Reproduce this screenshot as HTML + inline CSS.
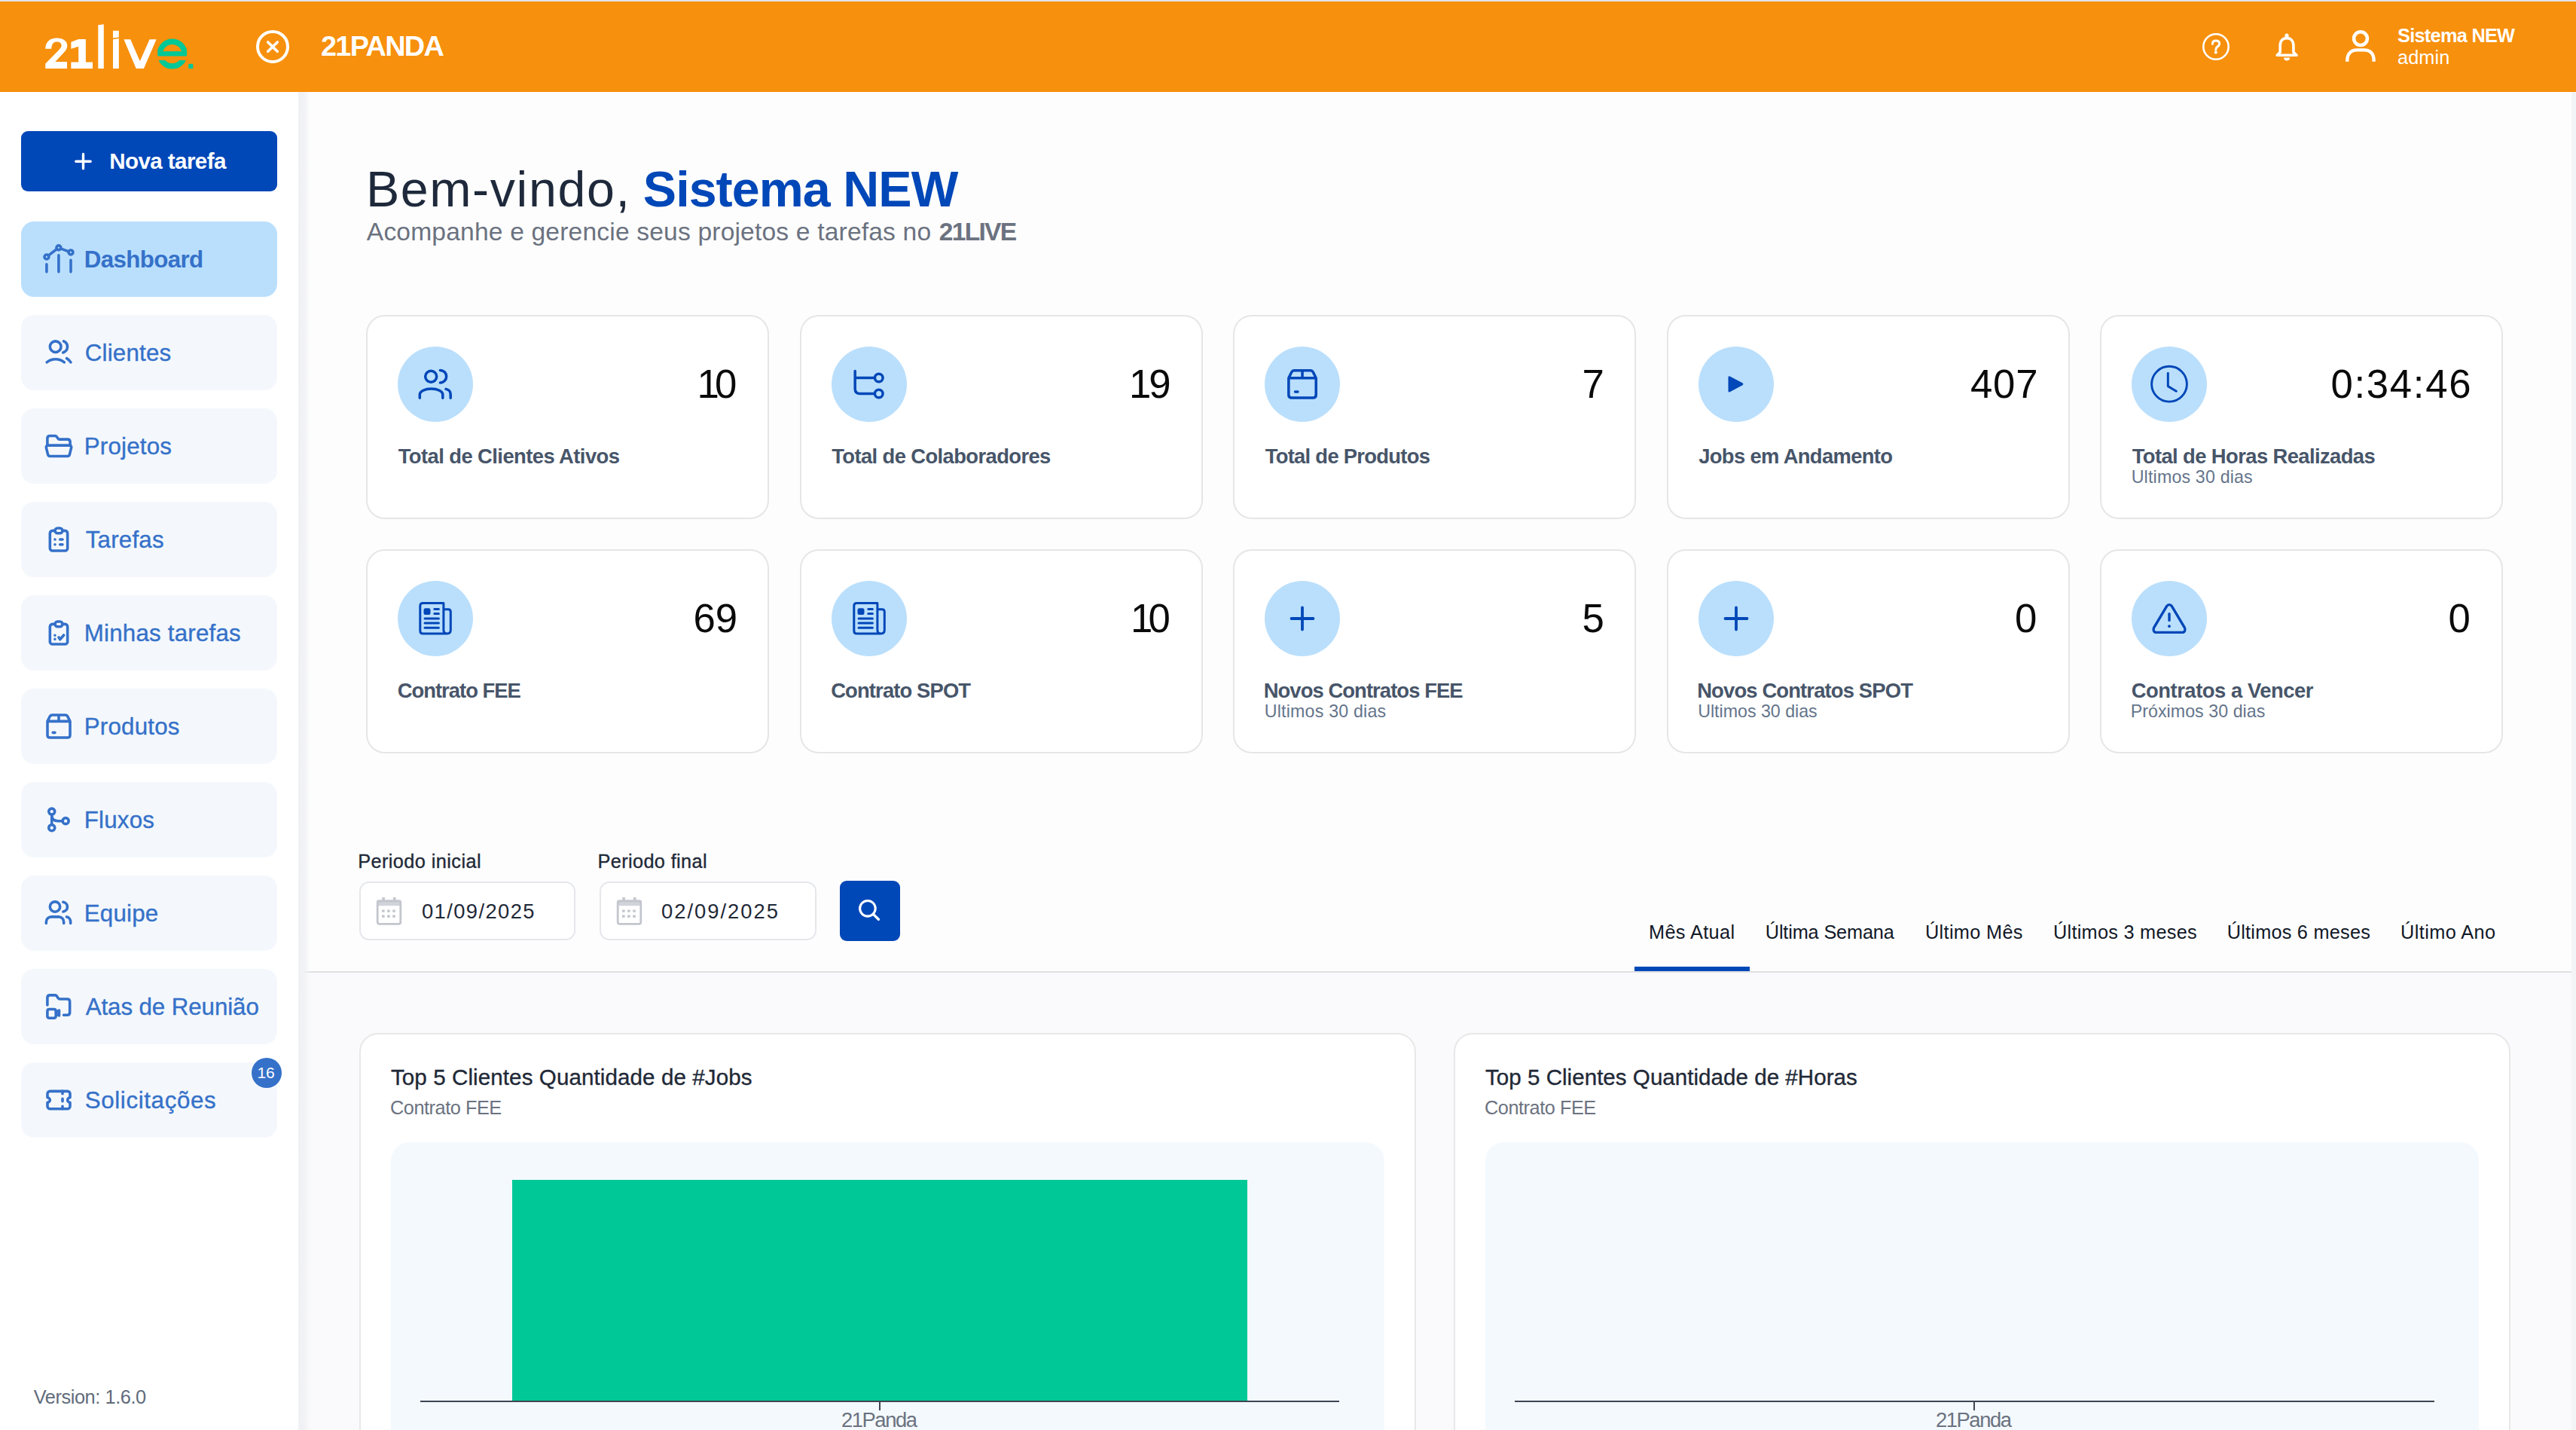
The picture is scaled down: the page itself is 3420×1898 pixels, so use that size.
<!DOCTYPE html>
<html lang="pt-BR"><head><meta charset="utf-8"><title>21live Dashboard</title>
<style>
html,body{margin:0;padding:0;width:3420px;height:1898px;overflow:hidden;background:#fff;font-family:'Liberation Sans', sans-serif}
body{position:relative;transform-origin:0 0}
@media (max-width:1800px){body{transform:scale(0.5)}}
.t{position:absolute;white-space:nowrap}
.abs{position:absolute}
header.top{position:absolute;left:0;top:0;width:3420px;height:122px;background:#F7900C;border-top:2px solid #E2E4E9;box-sizing:border-box}
header.top::after{content:"";position:absolute;left:0;right:0;bottom:0;height:1px;background:#F58A02}
aside.side{position:absolute;left:0;top:122px;width:396px;height:1776px;background:#fff}
main.main{position:absolute;left:396px;top:122px;width:3018px;height:1776px;background:#FAFAFC}
.rstrip{position:absolute;left:3414px;top:122px;width:6px;height:1776px;background:#F3F4F6}
.topsec{position:absolute;left:0;top:0;width:3018px;height:1167px;background:#FDFDFD;border-bottom:2px solid #DFE1E4}
.shade{position:absolute;left:396px;top:122px;width:16px;height:1776px;background:linear-gradient(to right,#F0F1F4 0,#F1F2F5 45%,rgba(250,250,252,0) 100%)}
.btn-new{position:absolute;left:28px;top:174px;width:340px;height:80px;border-radius:9px;background:#0047B8}
.nav{position:absolute;left:28px;width:340px;height:100px;border-radius:17px;background:#F4F8FC}
.nav.active{background:#BADFFD}
.badge{position:absolute;left:334px;top:1404px;width:40px;height:40px;border-radius:50%;background:#3571C9}
.card{position:absolute;width:535px;height:271px;box-sizing:border-box;border:2px solid #E6E6E6;border-radius:25px;background:#fff}
.ibub{position:absolute;width:100px;height:100px;border-radius:50%;background:#BADFFC}
.ibub svg{position:absolute;left:26px;top:26px;width:48px;height:48px}
.inp{position:absolute;top:1170px;width:287px;height:78px;box-sizing:border-box;border:2px solid #E5E7EB;border-radius:13px;background:#fff}
.sbtn{position:absolute;left:1115px;top:1169px;width:80px;height:80px;border-radius:9px;background:#0047B8}
.tabline{position:absolute;left:2170px;top:1283px;width:153px;height:6px;background:#0047B8}
.chart{position:absolute;top:1371px;width:1403px;height:600px;box-sizing:border-box;border:2px solid #E8E8E9;border-radius:25px;background:#fff}
.plot{position:absolute;top:1516px;width:1319px;height:500px;border-radius:25px;background:#F4F9FE}
.bar{position:absolute;left:680px;top:1566px;width:976px;height:293px;background:#00C896}
.axis{position:absolute;height:2px;top:1858px;background:#3F4652}
.tick{position:absolute;width:2px;height:11px;top:1859px;background:#3F4652}
svg.ic{position:absolute;overflow:visible}

</style></head><body>
<header class="top"></header>
<aside class="side"></aside>
<main class="main"><div class="topsec"></div></main>
<div class="rstrip"></div>
<div class="shade"></div>
<svg class="ic" style="left:0;top:0" width="3420" height="122" viewBox="0 0 3420 122">
<g fill="#fff">
<path d="M60.3 91 V84.5 L75.6 69 C80.2 64.3 81.6 62.5 81.6 60.2 C81.6 57.4 79.2 55.6 75.4 55.6 C71.5 55.6 68.8 57.6 68.2 64.7 L60.2 64.7 C60.6 55.6 66.1 50.6 75.3 50.6 C84.4 50.6 89.3 55 89.3 60.5 C89.3 64.9 87 67.8 82 72.7 L73.3 81.9 L89 81.9 L89 91 Z"/>
<path d="M94.4 55.7 L104.2 52.1 L113.9 51.9 L113.9 82.6 L123 82.6 L123 91 L94.4 91 L94.4 82.6 L104.2 82.6 L104.2 61.7 L94.4 64.7 Z"/>
<path d="M130.3 33.2 L137.8 32.3 L137.8 91 L130.3 91 Z"/>
<path d="M150 40.8 L157.8 40.8 L157.8 49.6 L150 50.6 Z"/>
<path d="M150 52.2 L157.8 51 L157.8 91 L150 91 Z"/>
<path d="M164.4 52.2 L173.2 52.2 L185.8 81.2 L198.6 52.2 L207.6 52.2 L190.9 91 L180.7 91 Z"/>
</g>
<defs><clipPath id="ecl"><rect x="200" y="40" width="60" height="28.1"/><rect x="200" y="80.1" width="60" height="20"/></clipPath></defs>
<circle cx="228.7" cy="71.5" r="16.3" fill="none" stroke="#00C896" stroke-width="7.4" clip-path="url(#ecl)"/>
<rect x="209.3" y="68.1" width="38.8" height="6.4" fill="#00C896"/>
<rect x="250.3" y="84.8" width="6" height="6.2" fill="#00C896"/>
<g fill="none" stroke="#fff" stroke-linecap="round">
<circle cx="362" cy="61.9" r="20" stroke-width="4"/>
<path d="M355.7 56 L368.3 68.3 M368.3 56 L355.7 68.3" stroke-width="3.6"/>
<circle cx="2942" cy="62" r="16.7" stroke-width="2.6"/>
<path d="M2937.4 58.2 C2937.4 55.5 2939.3 54 2942 54 C2944.8 54 2946.6 55.6 2946.6 58 C2946.6 60.3 2944.9 61.2 2943.6 62.3 C2942.4 63.3 2941.8 64.3 2941.8 66" stroke-width="3.1"/>
<path d="M3023.2 73.2 L3027.2 69.3 V60.5 C3027.2 54 3031 50.6 3036.1 50.6 C3041.2 50.6 3044.9 54 3044.9 60.5 V69.3 L3049 73.2 Z" stroke-width="3.6" stroke-linejoin="round"/>
<circle cx="3134" cy="51.1" r="8.9" stroke-width="4.6"/>
<path d="M3116.3 81.8 V79.5 C3116.3 71.5 3121.5 66.4 3129 66.4 H3139 C3146.5 66.4 3151.6 71.5 3151.6 79.5 V81.8" stroke-width="4.4" stroke-linecap="butt"/>
</g>
<g fill="#fff">
<circle cx="2941.8" cy="69.6" r="2"/>
<circle cx="3036" cy="47.2" r="2.6"/>
<path d="M3032 76.6 H3040.2 C3040.2 79 3038.5 80.6 3036.1 80.6 C3033.7 80.6 3032 79 3032 76.6 Z"/>
</g>
</svg>
<div class="btn-new"></div>
<svg class="ic" style="left:0;top:0" width="400" height="260" viewBox="0 0 400 260"><path d="M110.5 204.5 V223.8 M100.8 214.2 H120.2" stroke="#fff" stroke-width="3.4" stroke-linecap="round"/></svg>
<div class="nav active" style="top:294px"></div>
<div class="nav" style="top:418px"></div>
<div class="nav" style="top:542px"></div>
<div class="nav" style="top:666px"></div>
<div class="nav" style="top:790px"></div>
<div class="nav" style="top:914px"></div>
<div class="nav" style="top:1038px"></div>
<div class="nav" style="top:1162px"></div>
<div class="nav" style="top:1286px"></div>
<div class="nav" style="top:1410px"></div>
<div class="badge"></div>
<svg class="ic" style="left:58px;top:324px" width="40" height="40" viewBox="0 0 24 24" fill="none" stroke="#3571C9" stroke-width="2.15" stroke-linecap="round" stroke-linejoin="round"><circle cx="2.34" cy="10.2" r="1.76"/><circle cx="11.94" cy="2.88" r="1.76"/><circle cx="21.6" cy="6.54" r="1.76"/><path d="M3.75 9.1 L10.5 3.9 M13.6 3.5 L19.9 5.9 M2.34 16.1 V22.1 M11.94 8.9 V22.1 M21.6 12.8 V22.1"/></svg>
<svg class="ic" style="left:58px;top:448px" width="40" height="40" viewBox="0 0 24 24" fill="none" stroke="#3571C9" stroke-width="2.15" stroke-linecap="round" stroke-linejoin="round"><circle cx="9.4" cy="7.3" r="4.4"/><path d="M15.9 2.9 A4.83 4.83 0 0 1 15.4 12 M2.5 19.7 A11.2 11.2 0 0 1 16.4 19.7 M18.3 16.6 A9 9 0 0 1 21.6 19.7"/></svg>
<svg class="ic" style="left:58px;top:572px" width="40" height="40" viewBox="0 0 24 24" fill="none" stroke="#3571C9" stroke-width="2.15" stroke-linecap="round" stroke-linejoin="round"><path d="M2.94 10.8 V5.9 Q2.94 3.9 4.94 3.9 H9.2 Q9.9 3.9 10.4 4.6 L11.4 6 Q11.8 6.66 12.6 6.66 H19 Q21.06 6.66 21.06 8.7 V10.8"/><path d="M4 11.46 H20.1 Q22.3 11.46 22 13.3 L20.7 18.5 Q20.4 20.1 18.9 20.1 H5.1 Q3.6 20.1 3.3 18.5 L2 13.3 Q1.7 11.46 4 11.46 Z"/></svg>
<svg class="ic" style="left:58px;top:696px" width="40" height="40" viewBox="0 0 24 24" fill="none" stroke="#3571C9" stroke-width="2.15" stroke-linecap="round" stroke-linejoin="round"><path d="M9 5h-2a2 2 0 0 0 -2 2v12a2 2 0 0 0 2 2h10a2 2 0 0 0 2 -2v-12a2 2 0 0 0 -2 -2h-2"/><path d="M9 5a2 2 0 0 1 2 -2h2a2 2 0 0 1 2 2v0a2 2 0 0 1 -2 2h-2a2 2 0 0 1 -2 -2z"/><path d="M9 12l.01 0 M13 12l2 0 M9 16l.01 0 M13 16l2 0"/></svg>
<svg class="ic" style="left:58px;top:820px" width="40" height="40" viewBox="0 0 24 24" fill="none" stroke="#3571C9" stroke-width="2.15" stroke-linecap="round" stroke-linejoin="round"><path d="M9 5h-2a2 2 0 0 0 -2 2v12a2 2 0 0 0 2 2h10a2 2 0 0 0 2 -2v-12a2 2 0 0 0 -2 -2h-2"/><path d="M9 5a2 2 0 0 1 2 -2h2a2 2 0 0 1 2 2v0a2 2 0 0 1 -2 2h-2a2 2 0 0 1 -2 -2z"/><path d="M8.94 13.9l.01 0 M8.94 17l.01 0 M12 15.6 L13.1 17.2 L16 13.8"/></svg>
<svg class="ic" style="left:58px;top:944px" width="40" height="40" viewBox="0 0 24 24" fill="none" stroke="#3571C9" stroke-width="2.15" stroke-linecap="round" stroke-linejoin="round"><path d="M3 8 L4.9 4.2 Q5.5 3 6.8 3 H17.2 Q18.5 3 19.1 4.2 L21 8 V19 Q21 21 19 21 H5 Q3 21 3 19 Z M3 8 H21 M12 3 V8 M7.3 17 H9"/></svg>
<svg class="ic" style="left:58px;top:1068px" width="40" height="40" viewBox="0 0 24 24" fill="none" stroke="#3571C9" stroke-width="2.15" stroke-linecap="round" stroke-linejoin="round"><circle cx="6.44" cy="5.46" r="2.4"/><circle cx="6.44" cy="18.4" r="2.4"/><circle cx="17.5" cy="12.98" r="2.4"/><path d="M6.44 7.86 V16 M6.44 8.6 Q6.6 13 11.5 13 H15.1"/></svg>
<svg class="ic" style="left:58px;top:1192px" width="40" height="40" viewBox="0 0 24 24" fill="none" stroke="#3571C9" stroke-width="2.15" stroke-linecap="round" stroke-linejoin="round"><circle cx="9" cy="6.9" r="4"/><path d="M15.5 3.2 A4 3.85 0 0 1 15.5 10.8 M2 20.1 V19 A4.1 4.1 0 0 1 6.1 14.9 H11.9 A4.1 4.1 0 0 1 16 19 V20.1 M18.3 14.95 A3.4 4.2 0 0 1 21.4 19 V20.1"/></svg>
<svg class="ic" style="left:58px;top:1316px" width="40" height="40" viewBox="0 0 24 24" fill="none" stroke="#3571C9" stroke-width="2.15" stroke-linecap="round" stroke-linejoin="round"><path d="M2.94 10.8 V5 Q2.94 2.94 5 2.94 H9.3 Q9.9 2.94 10.3 3.5 L11.5 5.3 Q12 6 12.8 6 H18.8 Q20.8 6 20.8 8 V16.6 Q20.8 18.7 18.8 18.7 H15.9"/><path d="M4.6 14.1 H8.1 Q9.7 14.1 9.7 15.7 V19.5 Q9.7 21.1 8.1 21.1 H4.6 Q2.94 21.1 2.94 19.5 V15.7 Q2.94 14.1 4.6 14.1 Z M9.7 16.6 L12.3 15.1 V19.2 L9.7 17.8"/></svg>
<svg class="ic" style="left:58px;top:1440px" width="40" height="40" viewBox="0 0 24 24" fill="none" stroke="#3571C9" stroke-width="2.15" stroke-linecap="round" stroke-linejoin="round"><path d="M15 5l0 2 M15 11l0 2 M15 17l0 2"/><path d="M5 5h14a2 2 0 0 1 2 2v3a2 2 0 0 0 0 4v3a2 2 0 0 1 -2 2h-14a2 2 0 0 1 -2 -2v-3a2 2 0 0 0 0 -4v-3a2 2 0 0 1 2 -2"/></svg>
<div class="card" style="left:486.0px;top:418px"></div>
<div class="ibub" style="left:528.0px;top:460px"></div>
<div class="card" style="left:1061.5px;top:418px"></div>
<div class="ibub" style="left:1103.5px;top:460px"></div>
<div class="card" style="left:1637.0px;top:418px"></div>
<div class="ibub" style="left:1679.0px;top:460px"></div>
<div class="card" style="left:2212.5px;top:418px"></div>
<div class="ibub" style="left:2254.5px;top:460px"></div>
<div class="card" style="left:2788.0px;top:418px"></div>
<div class="ibub" style="left:2830.0px;top:460px"></div>
<div class="card" style="left:486.0px;top:729px"></div>
<div class="ibub" style="left:528.0px;top:771px"></div>
<div class="card" style="left:1061.5px;top:729px"></div>
<div class="ibub" style="left:1103.5px;top:771px"></div>
<div class="card" style="left:1637.0px;top:729px"></div>
<div class="ibub" style="left:1679.0px;top:771px"></div>
<div class="card" style="left:2212.5px;top:729px"></div>
<div class="ibub" style="left:2254.5px;top:771px"></div>
<div class="card" style="left:2788.0px;top:729px"></div>
<div class="ibub" style="left:2830.0px;top:771px"></div>
<svg class="ic" style="left:528.0px;top:460px" width="100" height="100" viewBox="0 0 100 100" fill="none" stroke="#0047B8" stroke-width="3.5" stroke-linecap="round" stroke-linejoin="round"><circle cx="44.2" cy="39.7" r="7.5"/><path d="M56.4 31.4 A8.2 8.2 0 0 1 56.4 47.9 M29.3 68.2 V63.6 A15.25 7.6 0 0 1 59.8 63.6 V68.2 M64 56.4 C68 57.2 70.2 60 70.2 63.6 V68.2"/></svg>
<svg class="ic" style="left:1103.5px;top:460px" width="100" height="100" viewBox="0 0 100 100" fill="none" stroke="#0047B8" stroke-width="3.5" stroke-linecap="round" stroke-linejoin="round"><path d="M31.2 32.4 V56 Q31.2 62.5 37.7 62.5 H57.4 M31.2 41.5 H57.4"/><circle cx="62.75" cy="41.5" r="5.3"/><circle cx="62.75" cy="62.5" r="5.3"/></svg>
<svg class="ic" style="left:1679.0px;top:460px" width="100" height="100" viewBox="0 0 100 100" fill="none" stroke="#0047B8" stroke-width="3.5" stroke-linecap="round" stroke-linejoin="round"><g transform="translate(25.8 25.6) scale(2.02)" stroke-width="1.75"><path d="M3 8 L4.9 4.2 Q5.5 3 6.8 3 H17.2 Q18.5 3 19.1 4.2 L21 8 V19 Q21 21 19 21 H5 Q3 21 3 19 Z M3 8 H21 M12 3 V8 M7.3 17 H9"/></g></svg>
<svg class="ic" style="left:2254.5px;top:460px" width="100" height="100" viewBox="0 0 100 100" fill="none" stroke="#0047B8" stroke-width="3.5" stroke-linecap="round" stroke-linejoin="round"><path d="M41.6 39.6 L58.4 48.3 Q60.4 49.8 58.4 51.3 L41.6 60.2 Q39.5 61.2 39.5 58.8 V41 Q39.5 38.6 41.6 39.6 Z" fill="#0047B8" stroke="none"/></svg>
<svg class="ic" style="left:2830.0px;top:460px" width="100" height="100" viewBox="0 0 100 100" fill="none" stroke="#0047B8" stroke-width="3.5" stroke-linecap="round" stroke-linejoin="round"><circle cx="50" cy="49.7" r="23.4" stroke-width="2.9"/><path d="M48.3 35.2 V52.6 L59.3 59.2" stroke-width="3"/></svg>
<svg class="ic" style="left:528.0px;top:771px" width="100" height="100" viewBox="0 0 100 100" fill="none" stroke="#0047B8" stroke-width="3.5" stroke-linecap="round" stroke-linejoin="round"><path d="M60.9 29.4 H33.5 Q29.8 29.4 29.8 33.1 V66.3 Q29.8 70 33.5 70 H65.6 Q70.3 70 70.3 65.3 V41 Q70.3 37.8 67.1 37.8 H60.9 M60.9 29.4 V65.3 Q60.9 70 65.6 70" stroke-width="3"/><rect x="36" y="37.8" width="6" height="5.6" rx="1" stroke-width="3" fill="#0047B8"/><path d="M48.8 37.6 H54.4 M48.8 43.4 H54.4 M36 50 H54.4 M36 56 H54.4 M36 62.2 H54.4" stroke-width="3"/></svg>
<svg class="ic" style="left:1103.5px;top:771px" width="100" height="100" viewBox="0 0 100 100" fill="none" stroke="#0047B8" stroke-width="3.5" stroke-linecap="round" stroke-linejoin="round"><path d="M60.9 29.4 H33.5 Q29.8 29.4 29.8 33.1 V66.3 Q29.8 70 33.5 70 H65.6 Q70.3 70 70.3 65.3 V41 Q70.3 37.8 67.1 37.8 H60.9 M60.9 29.4 V65.3 Q60.9 70 65.6 70" stroke-width="3"/><rect x="36" y="37.8" width="6" height="5.6" rx="1" stroke-width="3" fill="#0047B8"/><path d="M48.8 37.6 H54.4 M48.8 43.4 H54.4 M36 50 H54.4 M36 56 H54.4 M36 62.2 H54.4" stroke-width="3"/></svg>
<svg class="ic" style="left:1679.0px;top:771px" width="100" height="100" viewBox="0 0 100 100" fill="none" stroke="#0047B8" stroke-width="3.5" stroke-linecap="round" stroke-linejoin="round"><path d="M50 35.4 V64.5 M35.5 50 H64.5" stroke-width="3.8"/></svg>
<svg class="ic" style="left:2254.5px;top:771px" width="100" height="100" viewBox="0 0 100 100" fill="none" stroke="#0047B8" stroke-width="3.5" stroke-linecap="round" stroke-linejoin="round"><path d="M50 35.4 V64.5 M35.5 50 H64.5" stroke-width="3.8"/></svg>
<svg class="ic" style="left:2830.0px;top:771px" width="100" height="100" viewBox="0 0 100 100" fill="none" stroke="#0047B8" stroke-width="3.5" stroke-linecap="round" stroke-linejoin="round"><path d="M46.6 33.6 L29.6 62.2 C28 65.2 29.6 68.4 33 68.4 H67 C70.4 68.4 72 65.2 70.4 62.2 L53.4 33.6 C51.8 30.9 48.2 30.9 46.6 33.6 Z M50 43.6 V52.4" stroke-width="3.4"/><circle cx="50" cy="60.2" r="1.9" fill="#0047B8" stroke="none"/></svg>
<div class="inp" style="left:477px"></div>
<div class="inp" style="left:796px;width:288px"></div>
<svg class="ic" style="left:500.0px;top:1188px" width="34" height="40" viewBox="0 0 34 40"><rect x="1.2" y="8" width="30.6" height="30.4" rx="2.4" fill="none" stroke="#C3C6CD" stroke-width="2.8"/><rect x="0" y="6.6" width="33" height="7.6" rx="2" fill="#C3C6CD" fill-opacity="0.75"/><g fill="#C3C6CD"><rect x="7.3" y="3" width="3.6" height="5"/><rect x="21.9" y="3" width="3.6" height="5"/><rect x="7" y="19.5" width="3.6" height="3.2"/><rect x="14.1" y="19.5" width="3.6" height="3.2"/><rect x="21.2" y="19.5" width="3.6" height="3.2"/><rect x="7" y="26.5" width="3.6" height="3.4"/><rect x="14.1" y="26.5" width="3.6" height="3.4"/><rect x="21.2" y="26.5" width="3.6" height="3.4"/></g></svg>
<svg class="ic" style="left:818.5px;top:1188px" width="34" height="40" viewBox="0 0 34 40"><rect x="1.2" y="8" width="30.6" height="30.4" rx="2.4" fill="none" stroke="#C3C6CD" stroke-width="2.8"/><rect x="0" y="6.6" width="33" height="7.6" rx="2" fill="#C3C6CD" fill-opacity="0.75"/><g fill="#C3C6CD"><rect x="7.3" y="3" width="3.6" height="5"/><rect x="21.9" y="3" width="3.6" height="5"/><rect x="7" y="19.5" width="3.6" height="3.2"/><rect x="14.1" y="19.5" width="3.6" height="3.2"/><rect x="21.2" y="19.5" width="3.6" height="3.2"/><rect x="7" y="26.5" width="3.6" height="3.4"/><rect x="14.1" y="26.5" width="3.6" height="3.4"/><rect x="21.2" y="26.5" width="3.6" height="3.4"/></g></svg>
<div class="sbtn"></div>
<svg class="ic" style="left:1130px;top:1185px" width="50" height="50" viewBox="0 0 50 50" fill="none" stroke="#fff" stroke-linecap="round"><circle cx="21.9" cy="20.8" r="10.3" stroke-width="3.1"/><path d="M29.6 28.6 L36.4 35.3" stroke-width="3.4"/></svg>
<div class="tabline"></div>
<div class="chart" style="left:477px"></div>
<div class="chart" style="left:1930px"></div>
<div class="plot" style="left:519px"></div>
<div class="plot" style="left:1972px"></div>
<div class="bar"></div>
<div class="axis" style="left:558px;width:1220px;top:1859px"></div>
<div class="axis" style="left:2011px;width:1221px;top:1859px"></div>
<div class="tick" style="left:1167px;top:1861px"></div>
<div class="tick" style="left:2620px;top:1861px"></div>
<div class="t" id="hdr_org" style="left:426.00px;top:42.54px;font-size:37.83px;line-height:37.83px;font-weight:700;letter-spacing:-1.667px;color:#fff">21PANDA</div>
<div class="t" id="hdr_name" style="left:3183.00px;top:35.23px;font-size:25.29px;line-height:25.29px;font-weight:700;letter-spacing:-0.700px;color:#fff">Sistema NEW</div>
<div class="t" id="hdr_role" style="left:3183.00px;top:63.83px;font-size:25.29px;line-height:25.29px;font-weight:400;letter-spacing:0.125px;color:#fff">admin</div>
<div class="t" id="btn_new" style="left:145.30px;top:199.02px;font-size:29.57px;line-height:29.57px;font-weight:700;letter-spacing:-0.600px;color:#fff">Nova tarefa</div>
<div class="t" id="side0" style="left:111.70px;top:328.65px;font-size:31.30px;line-height:31.30px;font-weight:700;letter-spacing:-0.625px;color:#3571C9">Dashboard</div>
<div class="t" id="side1" style="left:112.70px;top:452.65px;font-size:31.30px;line-height:31.30px;font-weight:400;letter-spacing:0.214px;-webkit-text-stroke:0.35px currentColor;color:#3571C9">Clientes</div>
<div class="t" id="side2" style="left:111.70px;top:576.65px;font-size:31.30px;line-height:31.30px;font-weight:400;letter-spacing:0.214px;-webkit-text-stroke:0.35px currentColor;color:#3571C9">Projetos</div>
<div class="t" id="side3" style="left:113.70px;top:700.65px;font-size:31.30px;line-height:31.30px;font-weight:400;letter-spacing:0.214px;-webkit-text-stroke:0.35px currentColor;color:#3571C9">Tarefas</div>
<div class="t" id="side4" style="left:111.70px;top:824.65px;font-size:31.30px;line-height:31.30px;font-weight:400;letter-spacing:0.214px;-webkit-text-stroke:0.35px currentColor;color:#3571C9">Minhas tarefas</div>
<div class="t" id="side5" style="left:111.70px;top:948.65px;font-size:31.30px;line-height:31.30px;font-weight:400;letter-spacing:0.214px;-webkit-text-stroke:0.35px currentColor;color:#3571C9">Produtos</div>
<div class="t" id="side6" style="left:111.70px;top:1072.65px;font-size:31.30px;line-height:31.30px;font-weight:400;letter-spacing:0.214px;-webkit-text-stroke:0.35px currentColor;color:#3571C9">Fluxos</div>
<div class="t" id="side7" style="left:111.70px;top:1196.65px;font-size:31.30px;line-height:31.30px;font-weight:400;letter-spacing:0.214px;-webkit-text-stroke:0.35px currentColor;color:#3571C9">Equipe</div>
<div class="t" id="side8" style="left:113.70px;top:1320.65px;font-size:31.30px;line-height:31.30px;font-weight:400;letter-spacing:-0.093px;-webkit-text-stroke:0.35px currentColor;color:#3571C9">Atas de Reuni&atilde;o</div>
<div class="t" id="side9" style="left:112.70px;top:1444.65px;font-size:31.30px;line-height:31.30px;font-weight:400;letter-spacing:0.636px;-webkit-text-stroke:0.35px currentColor;color:#3571C9">Solicita&ccedil;&otilde;es</div>
<div class="t" id="version" style="left:44.80px;top:1842.43px;font-size:25.29px;line-height:25.29px;font-weight:400;letter-spacing:-0.408px;color:#5F6B7B">Version: 1.6.0</div>
<div class="t" id="welcome1" style="left:485.90px;top:217.61px;font-size:66.38px;line-height:66.38px;font-weight:400;letter-spacing:1.589px;color:#1E293B">Bem-vindo,</div>
<div class="t" id="welcome2" style="left:853.80px;top:217.61px;font-size:66.38px;line-height:66.38px;font-weight:700;letter-spacing:-0.930px;color:#0047B8">Sistema NEW</div>
<div class="t" id="sub1" style="left:486.80px;top:291.39px;font-size:33.62px;line-height:33.62px;font-weight:400;letter-spacing:0.165px;color:#6B7280">Acompanhe e gerencie seus projetos e tarefas no</div>
<div class="t" id="sub2" style="left:1246.80px;top:291.39px;font-size:33.62px;line-height:33.62px;font-weight:700;letter-spacing:-1.760px;color:#6B7280">21LIVE</div>
<div class="t" id="val00" style="left:925.50px;top:484.22px;font-size:52.75px;line-height:52.75px;font-weight:400;letter-spacing:-5.800px;color:#0A0A0A">10</div>
<div class="t" id="lab00" style="left:528.70px;top:591.65px;font-size:27.39px;line-height:27.39px;font-weight:700;letter-spacing:-0.565px;color:#475569">Total de Clientes Ativos</div>
<div class="t" id="val01" style="left:1499.00px;top:484.22px;font-size:52.75px;line-height:52.75px;font-weight:400;letter-spacing:-3.000px;color:#0A0A0A">19</div>
<div class="t" id="lab01" style="left:1104.20px;top:591.65px;font-size:27.39px;line-height:27.39px;font-weight:700;letter-spacing:-0.600px;color:#475569">Total de Colaboradores</div>
<div class="t" id="val02" style="left:2100.50px;top:484.22px;font-size:52.75px;line-height:52.75px;font-weight:400;letter-spacing:0.000px;color:#0A0A0A">7</div>
<div class="t" id="lab02" style="left:1679.70px;top:591.65px;font-size:27.39px;line-height:27.39px;font-weight:700;letter-spacing:-0.713px;color:#475569">Total de Produtos</div>
<div class="t" id="val03" style="left:2616.00px;top:484.22px;font-size:52.75px;line-height:52.75px;font-weight:400;letter-spacing:0.750px;color:#0A0A0A">407</div>
<div class="t" id="lab03" style="left:2255.20px;top:591.65px;font-size:27.39px;line-height:27.39px;font-weight:700;letter-spacing:-0.650px;color:#475569">Jobs em Andamento</div>
<div class="t" id="val04" style="left:3094.50px;top:484.22px;font-size:52.75px;line-height:52.75px;font-weight:400;letter-spacing:1.667px;color:#0A0A0A">0:34:46</div>
<div class="t" id="lab04" style="left:2830.70px;top:591.65px;font-size:27.39px;line-height:27.39px;font-weight:700;letter-spacing:-0.592px;color:#475569">Total de Horas Realizadas</div>
<div class="t" id="sub04" style="left:2829.70px;top:622.21px;font-size:23.19px;line-height:23.19px;font-weight:400;letter-spacing:0.179px;color:#64748B">Ultimos 30 dias</div>
<div class="t" id="val10" style="left:920.50px;top:795.22px;font-size:52.75px;line-height:52.75px;font-weight:400;letter-spacing:0.000px;color:#0A0A0A">69</div>
<div class="t" id="lab10" style="left:527.70px;top:902.65px;font-size:27.39px;line-height:27.39px;font-weight:700;letter-spacing:-0.973px;color:#475569">Contrato FEE</div>
<div class="t" id="val11" style="left:1501.00px;top:795.22px;font-size:52.75px;line-height:52.75px;font-weight:400;letter-spacing:-5.800px;color:#0A0A0A">10</div>
<div class="t" id="lab11" style="left:1103.20px;top:902.65px;font-size:27.39px;line-height:27.39px;font-weight:700;letter-spacing:-0.858px;color:#475569">Contrato SPOT</div>
<div class="t" id="val12" style="left:2100.50px;top:795.22px;font-size:52.75px;line-height:52.75px;font-weight:400;letter-spacing:0.000px;color:#0A0A0A">5</div>
<div class="t" id="lab12" style="left:1677.70px;top:902.65px;font-size:27.39px;line-height:27.39px;font-weight:700;letter-spacing:-0.917px;color:#475569">Novos Contratos FEE</div>
<div class="t" id="sub12" style="left:1678.70px;top:933.21px;font-size:23.19px;line-height:23.19px;font-weight:400;letter-spacing:0.214px;color:#64748B">Ultimos 30 dias</div>
<div class="t" id="val13" style="left:2675.00px;top:795.22px;font-size:52.75px;line-height:52.75px;font-weight:400;letter-spacing:0.000px;color:#0A0A0A">0</div>
<div class="t" id="lab13" style="left:2253.20px;top:902.65px;font-size:27.39px;line-height:27.39px;font-weight:700;letter-spacing:-0.842px;color:#475569">Novos Contratos SPOT</div>
<div class="t" id="sub13" style="left:2254.20px;top:933.21px;font-size:23.19px;line-height:23.19px;font-weight:400;letter-spacing:0.000px;color:#64748B">Ultimos 30 dias</div>
<div class="t" id="val14" style="left:3250.50px;top:795.22px;font-size:52.75px;line-height:52.75px;font-weight:400;letter-spacing:0.000px;color:#0A0A0A">0</div>
<div class="t" id="lab14" style="left:2829.70px;top:902.65px;font-size:27.39px;line-height:27.39px;font-weight:700;letter-spacing:-0.459px;color:#475569">Contratos a Vencer</div>
<div class="t" id="sub14" style="left:2828.70px;top:933.21px;font-size:23.19px;line-height:23.19px;font-weight:400;letter-spacing:0.053px;color:#64748B">Pr&oacute;ximos 30 dias</div>
<div class="t" id="lbl_ini" style="left:475.20px;top:1131.43px;font-size:25.29px;line-height:25.29px;font-weight:400;letter-spacing:0.429px;-webkit-text-stroke:0.35px currentColor;color:#1F2937">Periodo inicial</div>
<div class="t" id="lbl_fin" style="left:793.50px;top:1131.43px;font-size:25.29px;line-height:25.29px;font-weight:400;letter-spacing:0.375px;-webkit-text-stroke:0.35px currentColor;color:#1F2937">Periodo final</div>
<div class="t" id="date1" style="left:560.00px;top:1195.65px;font-size:27.39px;line-height:27.39px;font-weight:400;letter-spacing:1.389px;color:#1F2937">01/09/2025</div>
<div class="t" id="date2" style="left:878.00px;top:1195.65px;font-size:27.39px;line-height:27.39px;font-weight:400;letter-spacing:2.000px;color:#1F2937">02/09/2025</div>
<div class="t" id="tab0" style="left:2189.00px;top:1225.43px;font-size:25.29px;line-height:25.29px;font-weight:400;letter-spacing:0.375px;color:#111827">M&ecirc;s Atual</div>
<div class="t" id="tab1" style="left:2343.80px;top:1225.43px;font-size:25.29px;line-height:25.29px;font-weight:400;letter-spacing:-0.150px;color:#111827">&Uacute;ltima Semana</div>
<div class="t" id="tab2" style="left:2556.00px;top:1225.43px;font-size:25.29px;line-height:25.29px;font-weight:400;letter-spacing:0.333px;color:#111827">&Uacute;ltimo M&ecirc;s</div>
<div class="t" id="tab3" style="left:2726.00px;top:1225.43px;font-size:25.29px;line-height:25.29px;font-weight:400;letter-spacing:0.271px;color:#111827">&Uacute;ltimos 3 meses</div>
<div class="t" id="tab4" style="left:2956.70px;top:1225.43px;font-size:25.29px;line-height:25.29px;font-weight:400;letter-spacing:0.236px;color:#111827">&Uacute;ltimos 6 meses</div>
<div class="t" id="tab5" style="left:3187.00px;top:1225.43px;font-size:25.29px;line-height:25.29px;font-weight:400;letter-spacing:0.411px;color:#111827">&Uacute;ltimo Ano</div>
<div class="t" id="ch1_t" style="left:518.90px;top:1414.82px;font-size:29.57px;line-height:29.57px;font-weight:400;letter-spacing:0.091px;-webkit-text-stroke:0.35px currentColor;color:#1F2937">Top 5 Clientes Quantidade de #Jobs</div>
<div class="t" id="ch1_s" style="left:518.00px;top:1458.23px;font-size:25.29px;line-height:25.29px;font-weight:400;letter-spacing:-0.455px;color:#6B7280">Contrato FEE</div>
<div class="t" id="ch2_t" style="left:1972.00px;top:1414.82px;font-size:29.57px;line-height:29.57px;font-weight:400;letter-spacing:0.021px;-webkit-text-stroke:0.35px currentColor;color:#1F2937">Top 5 Clientes Quantidade de #Horas</div>
<div class="t" id="ch2_s" style="left:1971.00px;top:1458.23px;font-size:25.29px;line-height:25.29px;font-weight:400;letter-spacing:-0.455px;color:#6B7280">Contrato FEE</div>
<div class="t" id="ch1_x" style="left:1117.00px;top:1870.85px;font-size:27.39px;line-height:27.39px;font-weight:400;letter-spacing:-1.450px;color:#6B7280">21Panda</div>
<div class="t" id="ch2_x" style="left:2570.00px;top:1870.85px;font-size:27.39px;line-height:27.39px;font-weight:400;letter-spacing:-1.450px;color:#6B7280">21Panda</div>
<div class="t" id="badge" style="left:341.40px;top:1413.14px;font-size:21.01px;line-height:21.01px;font-weight:400;letter-spacing:0.000px;color:#fff">16</div>
</body></html>
